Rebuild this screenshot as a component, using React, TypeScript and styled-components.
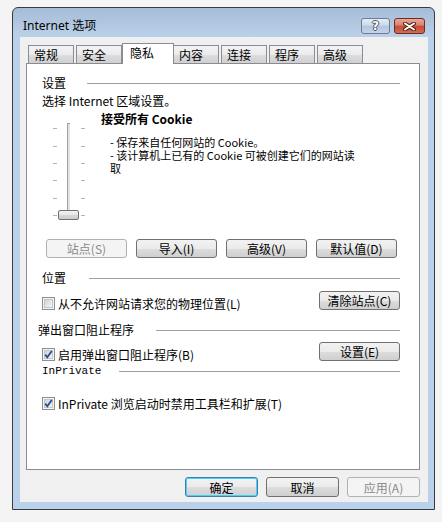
import React from 'react'
import styled, { createGlobalStyle, css } from 'styled-components'

const GlobalStyle = createGlobalStyle`
  html, body {
    margin: 0;
    padding: 0;
    background: #f4f4f4;
  }
  body {
    font-family: 'Noto Sans CJK SC', 'Noto Sans', sans-serif;
    font-size: 12px;
    color: #000;
  }
`

const Desktop = styled.div`
  width: 442px;
  height: 522px;
  padding: 7px 0 0 12px;
  box-sizing: border-box;
`

const Window = styled.div`
  width: 423px;
  height: 503px;
  box-sizing: border-box;
  border: 1px solid #3b3b3b;
  border-radius: 6px 6px 0 0;
  background: linear-gradient(#a5bcd7 0px, #bcd1e9 29px, #b9d1ea 29px);
  padding: 0 6px 7px 7px;
  display: flex;
  flex-direction: column;
`

const TitleBar = styled.div`
  height: 29px;
  display: flex;
  align-items: flex-start;
`

const Title = styled.div`
  flex: 1;
  padding: 11px 0 0 3px;
  line-height: 14px;
  font-family: 'Noto Sans', 'Noto Sans CJK SC', sans-serif;
  font-size: 12px;
`

const CaptionButtons = styled.div`
  display: flex;
  gap: 4px;
  margin: 10px 3px 0 0;
`

const CaptionButton = styled.div<{ $kind: 'help' | 'close' }>`
  height: 16px;
  box-sizing: border-box;
  border-radius: 3px;
  display: flex;
  align-items: center;
  justify-content: center;
  ${p =>
    p.$kind === 'help'
      ? css`
          width: 29px;
          border: 1px solid #6b7d95;
          background: linear-gradient(#e6edf6, #ccd9ea 45%, #b2c5dd 50%, #c3d5ea);
        `
      : css`
          width: 31px;
          border: 1px solid #6d2c22;
          background: linear-gradient(#e9a797, #d5826d 45%, #c34b34 50%, #d06d53);
        `}
`

const HelpGlyph = styled.span`
  font-family: 'DejaVu Sans', sans-serif;
  font-weight: bold;
  font-size: 12px;
  line-height: 12px;
  color: #fff;
  text-shadow: -1px 0 #4a5568, 1px 0 #4a5568, 0 -1px #4a5568, 0 1px #4a5568;
`

const Client = styled.div`
  flex: 1;
  background: #f0f0f0;
  padding: 6px 8px 5px 6px;
  display: flex;
  flex-direction: column;
`

const TabStrip = styled.div`
  height: 20px;
  padding-left: 2px;
  display: flex;
  align-items: flex-end;
  position: relative;
  z-index: 1;
`

const Tab = styled.div<{ $active?: boolean }>`
  box-sizing: border-box;
  width: 46px;
  height: 18px;
  margin-right: 2px;
  padding-left: 5px;
  border: 1px solid #898c95;
  border-bottom: none;
  line-height: 17px;
  background: linear-gradient(#f3f3f3, #ebebeb 50%, #dddddd 51%, #d0d0d0);
  ${p =>
    p.$active &&
    css`
      width: 52px;
      height: 21px;
      margin: 0 -1px -1px -2px;
      padding-left: 7px;
      background: #fff;
      position: relative;
      z-index: 2;
    `}
`

const Panel = styled.div`
  height: 407px;
  box-sizing: border-box;
  border: 1px solid #898c95;
  background: #fff;
  padding: 12px 19px 0 15px;
  display: flex;
  flex-direction: column;
`

const GroupHeader = styled.div<{ $top: number; $indent?: number }>`
  display: flex;
  align-items: center;
  height: 14px;
  margin-top: ${p => p.$top}px;
  margin-left: ${p => p.$indent ?? 0}px;
`

const GroupLabel = styled.div<{ $width: number; $mono?: boolean }>`
  width: ${p => p.$width}px;
  flex: none;
  line-height: 14px;
  ${p =>
    p.$mono &&
    css`
      font-family: 'Liberation Mono', monospace;
      font-size: 11px;
    `}
`

const Rule = styled.div`
  flex: 1;
  height: 1px;
  background: #a0a0a0;
`

const Line = styled.div<{ $top: number }>`
  margin-top: ${p => p.$top}px;
  height: 14px;
  line-height: 14px;
  white-space: nowrap;
`

const SliderSection = styled.div`
  margin-top: 4px;
  height: 112px;
  display: flex;
`

const SliderDrawing = styled.svg`
  flex: none;
  margin-left: 8px;
`

const Description = styled.div`
  margin-left: 11px;
`

const LevelTitle = styled.div`
  height: 14px;
  line-height: 14px;
  font-weight: bold;
`

const LevelText = styled.div`
  margin-top: 10px;
  padding-left: 9px;
  font-size: 11px;
  line-height: 13px;
  white-space: nowrap;
`

const ButtonRow = styled.div`
  margin-top: 15px;
  padding-left: 4px;
  display: flex;
  gap: 9px;
`

const Button = styled.div<{ $width: number; $height: number; $disabled?: boolean; $default?: boolean }>`
  width: ${p => p.$width}px;
  height: ${p => p.$height}px;
  box-sizing: border-box;
  border: 1px solid #707070;
  border-radius: 3px;
  background: linear-gradient(#f2f2f2, #ebebeb 50%, #dddddd 51%, #cfcfcf);
  display: flex;
  align-items: center;
  justify-content: center;
  white-space: nowrap;
  ${p =>
    p.$disabled &&
    css`
      border-color: #adb2b5;
      background: #f4f4f4;
      color: #8a8a8a;
    `}
  ${p =>
    p.$default &&
    css`
      border-color: #3c7fb1;
      box-shadow: inset 0 0 0 1px #48d1f5;
    `}
`

const CheckRow = styled.div<{ $top: number }>`
  margin-top: ${p => p.$top}px;
  height: 19px;
  display: flex;
  align-items: flex-end;
  justify-content: space-between;
`

const CheckLabel = styled.label<{ $top?: number }>`
  display: flex;
  align-items: center;
  gap: 3px;
  height: 13px;
  line-height: 13px;
  margin-top: ${p => p.$top ?? 0}px;
  white-space: nowrap;
`

const Footer = styled.div`
  margin-top: 7px;
  display: flex;
  justify-content: flex-end;
  gap: 8px;
`

const CloseGlyph = () => (
  <svg width="13" height="9" viewBox="0 0 13 9">
    <path d="M2 1.5 L11 7.5 M11 1.5 L2 7.5" stroke="#5a1f16" strokeWidth="4" strokeLinecap="round" />
    <path d="M2 1.5 L11 7.5 M11 1.5 L2 7.5" stroke="#fff" strokeWidth="2" strokeLinecap="round" />
  </svg>
)

const Checkbox = ({ checked }: { checked?: boolean }) => (
  <svg width="13" height="13" viewBox="0 0 13 13">
    <defs>
      <linearGradient id="cbFill" x1="0" y1="0" x2="1" y2="1">
        <stop offset="0" stopColor="#cdd1d6" />
        <stop offset="1" stopColor="#f7f7f7" />
      </linearGradient>
    </defs>
    <rect x="0.5" y="0.5" width="12" height="12" fill="#f4f4f4" stroke="#8e8f8f" />
    <rect x="2.5" y="2.5" width="8" height="8" fill="url(#cbFill)" stroke="#c3c6cb" />
    {checked && (
      <path d="M3.2 6.6 L5.3 9.2 L9.8 3" fill="none" stroke="#2d4b8e" strokeWidth="1.8" />
    )}
  </svg>
)

const ticks = [16, 34, 51, 68, 86, 103]

const Slider = () => (
  <SliderDrawing width="40" height="112" viewBox="0 0 40 112">
    {ticks.map(y => (
      <g key={y} fill="#b4b4b4">
        <rect x="3" y={y} width="4" height="1" />
        <rect x="31" y={y} width="4" height="1" />
      </g>
    ))}
    <rect x="17" y="11" width="3" height="92" fill="#e3e3e3" />
    <rect x="17" y="11" width="1" height="92" fill="#a0a0a0" />
    <rect x="17" y="11" width="3" height="1" fill="#a0a0a0" />
    <defs>
      <linearGradient id="thumbFill" x1="0" y1="0" x2="0" y2="1">
        <stop offset="0" stopColor="#f4f4f4" />
        <stop offset="0.5" stopColor="#e6e6e6" />
        <stop offset="0.55" stopColor="#d6d6d6" />
        <stop offset="1" stopColor="#cccccc" />
      </linearGradient>
    </defs>
    <rect x="8.5" y="98.5" width="20" height="9" rx="1.5" fill="url(#thumbFill)" stroke="#707070" />
  </SliderDrawing>
)

const tabs = ['常规', '安全', '隐私', '内容', '连接', '程序', '高级']

export default function App() {
  return (
    <>
      <GlobalStyle />
      <Desktop>
        <Window>
          <TitleBar>
            <Title>Internet 选项</Title>
            <CaptionButtons>
              <CaptionButton $kind="help">
                <HelpGlyph>?</HelpGlyph>
              </CaptionButton>
              <CaptionButton $kind="close">
                <CloseGlyph />
              </CaptionButton>
            </CaptionButtons>
          </TitleBar>
          <Client>
            <TabStrip>
              {tabs.map(t => (
                <Tab key={t} $active={t === '隐私'}>
                  {t}
                </Tab>
              ))}
            </TabStrip>
            <Panel>
              <GroupHeader $top={0}>
                <GroupLabel $width={45}>设置</GroupLabel>
                <Rule />
              </GroupHeader>
              <Line $top={4}>选择 Internet 区域设置。</Line>
              <SliderSection>
                <Slider />
                <Description>
                  <LevelTitle>接受所有 Cookie</LevelTitle>
                  <LevelText>
                    <div>- 保存来自任何网站的 Cookie。</div>
                    <div>- 该计算机上已有的 Cookie 可被创建它们的网站读</div>
                    <div>取</div>
                  </LevelText>
                </Description>
              </SliderSection>
              <ButtonRow>
                <Button $width={81} $height={19} $disabled>站点(S)</Button>
                <Button $width={81} $height={19}>导入(I)</Button>
                <Button $width={81} $height={19}>高级(V)</Button>
                <Button $width={81} $height={19}>默认值(D)</Button>
              </ButtonRow>

              <GroupHeader $top={13}>
                <GroupLabel $width={47}>位置</GroupLabel>
                <Rule />
              </GroupHeader>
              <CheckRow $top={6}>
                <CheckLabel>
                  <Checkbox />
                  从不允许网站请求您的物理位置(L)
                </CheckLabel>
                <Button $width={81} $height={19}>清除站点(C)</Button>
              </CheckRow>

              <GroupHeader $top={13} $indent={-4}>
                <GroupLabel $width={118}>弹出窗口阻止程序</GroupLabel>
                <Rule />
              </GroupHeader>
              <CheckRow $top={5}>
                <CheckLabel>
                  <Checkbox checked />
                  启用弹出窗口阻止程序(B)
                </CheckLabel>
                <Button $width={81} $height={19}>设置(E)</Button>
              </CheckRow>

              <GroupHeader $top={3}>
                <GroupLabel $width={77} $mono>InPrivate</GroupLabel>
                <Rule />
              </GroupHeader>
              <CheckLabel $top={19}>
                <Checkbox checked />
                InPrivate 浏览启动时禁用工具栏和扩展(T)
              </CheckLabel>
            </Panel>
            <Footer>
              <Button $width={73} $height={20} $default>确定</Button>
              <Button $width={73} $height={20}>取消</Button>
              <Button $width={73} $height={20} $disabled>应用(A)</Button>
            </Footer>
          </Client>
        </Window>
      </Desktop>
    </>
  )
}
